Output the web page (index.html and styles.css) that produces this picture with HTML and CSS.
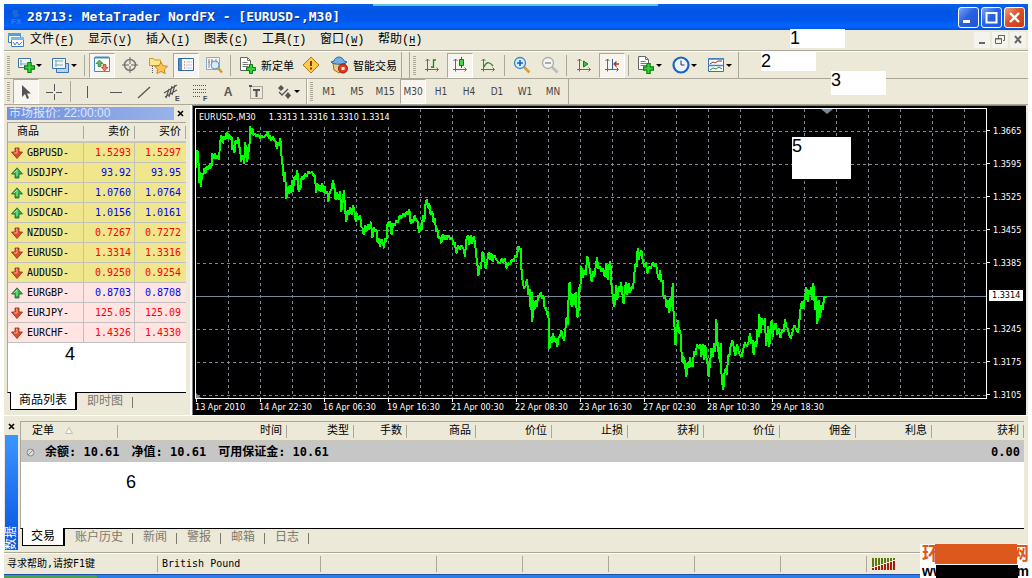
FILE: index.html
```html
<!DOCTYPE html>
<html lang="zh-CN">
<head>
    <meta charset="UTF-8">
    <meta name="viewport" content="width=device-width, initial-scale=1.0">
    <title>28713: MetaTrader NordFX - [EURUSD-,M30]</title>
    <link rel="stylesheet" href="styles.css">
</head>
<body>
    <!-- shared symbols -->
    <svg class="defs" width="0" height="0">
        <symbol id="down" viewBox="0 0 12 12">
            <path d="M4 1h4v4h3.5L6 11.5.5 5H4z" fill="#d8502c" stroke="#8f2a10" stroke-width=".8"/>
            <path d="M5 2h1v4H3" stroke="#ffb090" fill="none"/>
        </symbol>
        <symbol id="up" viewBox="0 0 12 12">
            <path d="M6 .8L11.5 7H8v4H4V7H.5z" fill="#2fae4a" stroke="#12682a" stroke-width=".8"/>
            <path d="M3 6l3-3v6" stroke="#a8f0a8" fill="none"/>
        </symbol>
        <symbol id="plus" viewBox="0 0 10 10">
            <path d="M3.5.5h3v3h3v3h-3v3h-3v-3h-3v-3h3z" fill="#35d235" stroke="#0b7d12"/>
        </symbol>
        <symbol id="axes" viewBox="0 0 18 18">
            <path d="M4.500 15.500V3M2.500 5l2-2 2 2M2 13.500h13M13.500 11.500l2 2-2 2" fill="none" stroke="#666"/>
        </symbol>
        <symbol id="doc" viewBox="0 0 12 14">
            <path d="M.5.500h7l3 3v10H.5z" fill="#fff" stroke="#666"/>
            <path d="M7.500.500v3h3M2.500 5.500h5M2.500 7.500h6M2.500 9.500h6" fill="none" stroke="#777"/>
        </symbol>
    </svg>

    <div class="window">
        <header class="titlebar">
            <svg class="logo" width="18" height="20" viewBox="0 0 18 20">
                <path d="M5 3h6l-2 3 3 2-5 3-3-4z" fill="#1c6fd6" opacity=".8"/>
                <text x="3" y="17" class="logo-text">FX</text>
            </svg>
            <h1>28713: MetaTrader NordFX - [EURUSD-,M30]</h1>
            <div class="win-buttons">
                <button class="win-btn" aria-label="最小化"><svg width="19" height="19"><path d="M4 12h7v3H4z" fill="#fff"/></svg></button>
                <button class="win-btn" aria-label="最大化"><svg width="19" height="19"><path d="M4.500 5h10v9.500h-10zM4 5h11" fill="none" stroke="#fff" stroke-width="2"/></svg></button>
                <button class="win-btn close" aria-label="关闭"><svg width="19" height="19"><path d="M5 5l9 9M14 5l-9 9" stroke="#fff" stroke-width="2.400"/></svg></button>
            </div>
        </header>

        <nav class="menubar">
            <svg class="menu-icon" width="16" height="16" viewBox="0 0 16 16">
                <path d="M.5 1.500h12v9H.5z" fill="#fff" stroke="#3d7ec8"/>
                <path d="M0 1h13v3H0z" fill="#5b9ce0"/>
                <path d="M3.500 5.500h12v9h-12z" fill="#fff" stroke="#3d7ec8"/>
                <path d="M3 5h13v3H3z" fill="#7fb6ee"/>
                <path d="M5 10l2 3 2-3 2 3 3-3" fill="none" stroke="#5577aa"/>
            </svg>
            <button>文件(<u>F</u>)</button>
            <button>显示(<u>V</u>)</button>
            <button>插入(<u>I</u>)</button>
            <button>图表(<u>C</u>)</button>
            <button>工具(<u>T</u>)</button>
            <button>窗口(<u>W</u>)</button>
            <button>帮助(<u>H</u>)</button>
            <div class="mdi-buttons">
                <button aria-label="最小化"><svg width="16" height="15"><path d="M5 10h6v2H5z" fill="#666"/></svg></button>
                <button aria-label="还原"><svg width="16" height="15"><path d="M6.500 6V3.500h6v5H11M6 3.500h7" fill="none" stroke="#666"/><path d="M3.500 6.500h6v5h-6zM3 7h7" fill="none" stroke="#666"/></svg></button>
                <button aria-label="关闭"><svg width="16" height="15"><path d="M5 4l6 7M11 4l-6 7" stroke="#666" stroke-width="2"/></svg></button>
            </div>
        </nav>

        <div class="toolrow">
            <div class="toolbar">
                <span class="grip"></span>
                <button class="tool drop" aria-label="新图表"><svg width="18" height="18" viewBox="0 0 18 18"><path d="M1.500 2.500h12v9h-12z" fill="#eef5fc" stroke="#3a73ad"/><path d="M4 4v6M3 8h8M3 5h2" stroke="#8aa" fill="none"/><use href="#plus" x="7" y="6" width="11" height="11"/></svg></button>
                <button class="tool drop" aria-label="配置"><svg width="18" height="18" viewBox="0 0 18 18"><path d="M4.500 7.500h12v9h-12z" fill="#b9d4ef" stroke="#3a73ad"/><path d="M.5 2.500h13v10H.5z" fill="#eef5fc" stroke="#3a73ad"/><path d="M3 5h8M3 9h8M4 4v7" stroke="#8aa" fill="none"/></svg></button>
                <span class="sep"></span>
                <button class="tool on" aria-label="市场报价"><svg width="18" height="18" viewBox="0 0 18 18"><path d="M1.500 1.500h15v14h-15z" fill="#fff" stroke="#4a86c5"/><path d="M2 1.500h14" stroke="#4a86c5" stroke-width="2"/><path d="M6.500 4L10 7.500H8v3H5v-3H3z" fill="#5dbb5d" stroke="#1c7f2c" stroke-width=".7"/><path d="M11.500 15L8.500 11.500H10v-3h3v3h2z" fill="#f08060" stroke="#b03010" stroke-width=".7"/></svg></button>
                <button class="tool" aria-label="数据窗口"><svg width="18" height="18" viewBox="0 0 18 18"><circle cx="9" cy="9" r="5.500" fill="none" stroke="#777" stroke-width="1.500"/><path d="M9 1v7M9 10v7M1 9h7M10 9h7" stroke="#666"/></svg></button>
                <button class="tool" aria-label="导航"><svg width="20" height="18" viewBox="0 0 20 18"><path d="M1.500 9.500v-7h4l1 1.500h6v5.500z" fill="#ffe68a" stroke="#c79a2a"/><path d="M4.500 10v7" stroke="#555" stroke-dasharray="1 1"/><path d="M13 6l2 3.800 4.500.5-3.200 3 .8 4.200-4.100-2-4.100 2 .8-4.200-3.200-3 4.500-.5z" fill="#ffc64a" stroke="#b8731c" stroke-width=".8"/></svg></button>
                <button class="tool on" aria-label="终端"><svg width="18" height="18" viewBox="0 0 18 18"><path d="M1.500 2.500h15v12h-15z" fill="#fff" stroke="#2e66a8"/><path d="M2 3h3v11H2z" fill="#4a90d9"/><path d="M7 6h1M7 9h1M7 12h1" stroke="#d03030"/><path d="M9 6h6M9 9h6M9 12h6" stroke="#b5c7da"/></svg></button>
                <button class="tool" aria-label="策略测试"><svg width="18" height="18" viewBox="0 0 18 18"><path d="M1.500 1.500h13v12h-13z" fill="#f4f4f4" stroke="#8ba9c8"/><path d="M4 3v9M7 3v6M11 3v5M3 6h2M6 5h2" stroke="#888"/><circle cx="10" cy="9" r="4" fill="#cfe8fb" fill-opacity=".8" stroke="#5595c8"/><path d="M13 12l4 4.500" stroke="#d4952a" stroke-width="2.500"/></svg></button>
                <span class="sep"></span>
                <button class="tool text order"><svg width="18" height="19" viewBox="0 0 18 19"><use href="#doc" x="1" y="1" width="12" height="14"/><use href="#plus" x="7" y="8" width="10" height="10"/></svg>新定单</button>
                <button class="tool" aria-label="MetaEditor"><svg width="18" height="18" viewBox="0 0 18 18"><path d="M9 1l8 8-8 8-8-8z" fill="#ffc94a" stroke="#b97510"/><path d="M8 5h2v5H8zM8 11.500h2v2H8z" fill="#7a3c00"/></svg></button>
                <button class="tool text expert"><svg width="19" height="18" viewBox="0 0 19 18"><path d="M3 7h12l-1 7-5 3-5-3z" fill="#f5c77b" stroke="#a86d22"/><path d="M1 6l3-1c0-2 3-4 5-4s5 2 5 4l3 1c-2 3-14 3-16 0z" fill="#6fb0e6" stroke="#28659f"/><circle cx="13" cy="12.500" r="4.500" fill="#e03a20" stroke="#8f1b0b"/><path d="M11.500 11h3v3h-3z" fill="#fff"/></svg>智能交易</button>
            </div>
            <div class="toolbar">
                <span class="grip"></span>
                <button class="tool" aria-label="柱状图"><svg width="18" height="18" viewBox="0 0 18 18"><use href="#axes" width="18" height="18"/><path d="M8 11h2.500V4H13M10.500 4v8" fill="none" stroke="#118a1c" stroke-width="1.300"/></svg></button>
                <button class="tool on" aria-label="阴阳烛"><svg width="18" height="18" viewBox="0 0 18 18"><use href="#axes" width="18" height="18"/><path d="M10.500 1v11" stroke="#0b7d12"/><path d="M8.500 3.500h4v6h-4z" fill="#45d645" stroke="#0b7d12"/></svg></button>
                <button class="tool" aria-label="折线图"><svg width="18" height="18" viewBox="0 0 18 18"><use href="#axes" width="18" height="18"/><path d="M5 11c2-5 5-6 9-1" fill="none" stroke="#2d8a35" stroke-width="1.300"/></svg></button>
                <span class="sep"></span>
                <button class="tool" aria-label="放大"><svg width="18" height="18" viewBox="0 0 18 18"><path d="M11 11l5.500 5.500" stroke="#d9a030" stroke-width="2.600"/><circle cx="7" cy="7" r="5.500" fill="#d4ecff" stroke="#3b84c8" stroke-width="1.300"/><path d="M7 4v6M4 7h6" stroke="#1c62b0" stroke-width="1.600"/></svg></button>
                <button class="tool" aria-label="缩小"><svg width="18" height="18" viewBox="0 0 18 18"><path d="M11 11l5.500 5.500" stroke="#bbb" stroke-width="2.600"/><circle cx="7" cy="7" r="5.500" fill="#f3f3f0" stroke="#aaa" stroke-width="1.300"/><path d="M4 7h6" stroke="#999" stroke-width="1.600"/></svg></button>
                <span class="sep"></span>
                <button class="tool" aria-label="自动滚动"><svg width="18" height="18" viewBox="0 0 18 18"><use href="#axes" width="18" height="18"/><path d="M8.500 5l4.500 3-4.500 3z" fill="#3ec03e" stroke="#0b7d12"/></svg></button>
                <button class="tool on" aria-label="图表平移"><svg width="18" height="18" viewBox="0 0 18 18"><use href="#axes" width="18" height="18"/><path d="M9.500 3v10" stroke="#2b62a8"/><path d="M16 8h-4M13.500 5.500L11 8l2.500 2.500" fill="none" stroke="#b03010" stroke-width="1.300"/></svg></button>
                <span class="sep"></span>
                <button class="tool drop" aria-label="指标"><svg width="18" height="18" viewBox="0 0 18 18"><use href="#doc" x="1" y="0" width="12" height="14"/><use href="#plus" x="6" y="7" width="11" height="11"/></svg></button>
                <button class="tool drop" aria-label="时段"><svg width="18" height="18" viewBox="0 0 18 18"><circle cx="9" cy="9" r="7.500" fill="#eaf5ff" stroke="#1d62c4" stroke-width="2.200"/><path d="M9 4.500V9h3.500" fill="none" stroke="#334"/></svg></button>
                <button class="tool drop" aria-label="模板"><svg width="18" height="18" viewBox="0 0 18 18"><path d="M1.500 2.500h15v13h-15z" fill="#fff" stroke="#3a73ad"/><path d="M1 3h16M2 9.500h14" stroke="#3f86cf" stroke-width="1.500"/><path d="M3 8l3-2 2 1 3-2h4" fill="none" stroke="#a02a1a"/><path d="M3 14l3-2 3 1 3-2 3 2" fill="none" stroke="#2d8a35"/></svg></button>
            </div>
        </div>

        <div class="toolrow">
            <div class="toolbar">
                <span class="grip"></span>
                <button class="tool on" aria-label="光标"><svg width="18" height="18" viewBox="0 0 18 18"><path d="M5 2v12l3-3 2 5 2-1-2-4.500h4z" fill="#555"/></svg></button>
                <button class="tool" aria-label="十字准线"><svg width="18" height="18" viewBox="0 0 18 18"><path d="M9.500 1v7M9.500 11v6M1 9.500h7M11 9.500h6" stroke="#555"/></svg></button>
                <span class="sep"></span>
                <button class="tool" aria-label="垂直线"><svg width="18" height="18"><path d="M8.500 3v12" stroke="#555"/></svg></button>
                <button class="tool" aria-label="水平线"><svg width="18" height="18"><path d="M3 9.500h12" stroke="#555"/></svg></button>
                <button class="tool" aria-label="趋势线"><svg width="18" height="18"><path d="M3 15L15 4" stroke="#555" stroke-width="1.300"/></svg></button>
                <button class="tool" aria-label="等距通道"><svg width="18" height="18" viewBox="0 0 18 18"><path d="M1 10L14 2M2 14l12-7M6 6l-3 9M9 3L6 14M12 2L9 12" stroke="#555" stroke-width="1.200"/><text x="12" y="18" class="icon-letter">E</text></svg></button>
                <button class="tool" aria-label="斐波纳契"><svg width="18" height="18" viewBox="0 0 18 18"><path d="M2 2.500h14M2 6.500h14M2 9.500h14M2 13.500h8" stroke="#555" stroke-dasharray="1 1"/><text x="12" y="18" class="icon-letter">F</text></svg></button>
                <button class="tool glyph">A</button>
                <button class="tool" aria-label="文字标签"><svg width="18" height="18" viewBox="0 0 18 18"><path d="M3.500 3.500h12v12h-12z" fill="none" stroke="#666" stroke-dasharray="1 1"/><path d="M2 2h3v2H2z" fill="#555"/><path d="M6 6h7v2h-2.500v6h-2V8H6z" fill="#555"/></svg></button>
                <button class="tool drop" aria-label="箭头"><svg width="18" height="18" viewBox="0 0 18 18"><path d="M6 2l3 3-3 3-3-3z M13 9l3 3.500-3 3.500-3-3.500z" fill="#555"/><path d="M4 9l3 3 6-6" fill="none" stroke="#555" stroke-width="1.300"/></svg></button>
            </div>
            <div class="toolbar periods">
                <span class="grip"></span>
                <button class="tool">M1</button>
                <button class="tool">M5</button>
                <button class="tool">M15</button>
                <button class="tool on">M30</button>
                <button class="tool">H1</button>
                <button class="tool">H4</button>
                <button class="tool">D1</button>
                <button class="tool">W1</button>
                <button class="tool">MN</button>
            </div>
        </div>

        <main class="workspace">
            <section class="market">
                <div class="market-title"><h2>市场报价: 22:00:00</h2><button class="x" aria-label="关闭"><svg width="7" height="7"><path d="M1 1l5 5M6 1L1 6" stroke="#000" stroke-width="1.600"/></svg></button></div>
                <div class="market-list">
                    <table class="quotes">
                        <thead><tr><th>商品</th><th>卖价</th><th>买价</th></tr></thead>
                        <tbody>
                            <tr class="fall"><td><svg width="12" height="12"><use href="#down"/></svg>GBPUSD-</td><td>1.5293</td><td>1.5297</td></tr>
                            <tr class="rise"><td><svg width="12" height="12"><use href="#up"/></svg>USDJPY-</td><td>93.92</td><td>93.95</td></tr>
                            <tr class="rise"><td><svg width="12" height="12"><use href="#up"/></svg>USDCHF-</td><td>1.0760</td><td>1.0764</td></tr>
                            <tr class="rise"><td><svg width="12" height="12"><use href="#up"/></svg>USDCAD-</td><td>1.0156</td><td>1.0161</td></tr>
                            <tr class="fall"><td><svg width="12" height="12"><use href="#down"/></svg>NZDUSD-</td><td>0.7267</td><td>0.7272</td></tr>
                            <tr class="fall"><td><svg width="12" height="12"><use href="#down"/></svg>EURUSD-</td><td>1.3314</td><td>1.3316</td></tr>
                            <tr class="fall"><td><svg width="12" height="12"><use href="#down"/></svg>AUDUSD-</td><td>0.9250</td><td>0.9254</td></tr>
                            <tr class="rise cross"><td><svg width="12" height="12"><use href="#up"/></svg>EURGBP-</td><td>0.8703</td><td>0.8708</td></tr>
                            <tr class="fall cross"><td><svg width="12" height="12"><use href="#down"/></svg>EURJPY-</td><td>125.05</td><td>125.09</td></tr>
                            <tr class="fall cross"><td><svg width="12" height="12"><use href="#down"/></svg>EURCHF-</td><td>1.4326</td><td>1.4330</td></tr>
                        </tbody>
                    </table>
                </div>
                <div class="tabs">
                    <button class="tab active">商品列表</button>
                    <button class="tab">即时图</button>
                </div>
            </section>

            <section class="chart">
                <div class="plot">
                    <svg class="plot-svg" width="100%" height="100%">
                        <g stroke="#778899" stroke-dasharray="3 3" fill="none" shape-rendering="crispEdges">
                            <path d="M32.500 0V800M64.500 0V800M96.500 0V800M128.500 0V800M160.500 0V800M192.500 0V800M224.500 0V800M256.500 0V800M288.500 0V800M320.500 0V800M352.500 0V800M384.500 0V800M416.500 0V800M448.500 0V800M480.500 0V800M512.500 0V800M544.500 0V800M576.500 0V800M608.500 0V800M640.500 0V800M672.500 0V800M704.500 0V800M736.500 0V800M768.500 0V800"/>
                            <path d="M1 22.500H2000M1 55.500H2000M1 88.500H2000M1 121.500H2000M1 154.500H2000M1 220.500H2000M1 253.500H2000M1 286.500H2000"/>
                        </g>
                        <path d="M0 187.500H2000" stroke="#778899" shape-rendering="crispEdges"/>
                        <g fill="none" stroke="#00ff00" stroke-width="6" stroke-linejoin="bevel" shape-rendering="crispEdges">
                            <polyline transform="translate(-6 -4) scale(.33333)" points="18,190 22,135 25,150 27,235 30,200 33,245 36,205 40,210 43,190 46,205 50,185 55,195 60,175 64,190 67,145 71,160 74,145 78,160 82,150 87,165 90,115 94,90 98,115 102,95 106,105 110,82 114,100 118,88 122,105 125,95 127,135 131,120 133,145 137,105 141,115 145,98 148,125 151,140 153,172 157,150 160,155 163,178 165,112 169,130 172,170 175,125 178,140 180,62 184,85 187,70 190,90 195,85 200,95 205,88 210,100 216,92 222,98 228,90 233,78 236,100 240,92 243,108 248,95 253,105 257,110 260,130 264,112 268,122 271,100 274,150 278,180 282,230 285,200 289,282 292,245 296,268 299,240 303,265 306,225 309,262 313,215 317,225 322,195 326,262 329,240 331,255 335,215 340,225 345,205 350,215 355,198 360,205 366,200 371,215 375,210 378,265 382,235 386,258 390,240 394,260 397,235 401,265 404,245 408,265 412,258 415,292 419,262 424,255 429,225 433,245 437,285 441,262 446,285 450,258 454,320 458,290 462,255 465,310 469,350 473,315 477,330 481,305 485,330 489,300 493,318 497,350 501,325 505,345 510,330 514,365 518,370 521,390 525,362 529,380 534,358 538,375 543,350 547,400 551,368 555,380 559,372 562,412 566,400 570,425 574,402 578,412 582,430 585,400 589,410 593,350 597,365 601,350 605,390 609,355 614,362 619,345 624,352 629,330 634,340 640,325 645,335 650,320 655,330 658,312 662,355 666,342 670,352 674,332 679,345 683,350 687,385 691,365 695,375 699,330 703,350 706,300 710,282 714,310 718,295 722,330 727,320 731,355 735,340 738,380 742,370 746,402 750,395"/>
                            <polyline transform="translate(244 111) scale(.33333)" points="0,50 4,70 8,42 12,60 16,45 20,60 25,45 30,58 36,52 40,75 44,68 49,100 54,75 59,88 64,75 70,85 75,110 79,60 84,45 88,75 92,45 96,72 101,50 105,68 109,110 112,130 115,168 119,140 123,145 127,95 132,115 137,148 141,125 146,98 150,118 154,100 158,125 163,105 168,118 174,125 180,130 186,115 190,128 195,115 199,145 205,130 210,132 216,118 221,125 226,105 230,112 235,78 239,90 242,85 245,160 248,185 252,205 256,200 261,178 265,225 269,208 272,270 275,215 277,307 280,240 283,270 287,240 291,260 294,225 298,232 302,218 306,235 310,225 314,265 318,262 321,285 325,275 328,388 332,350 335,368 339,338 343,365 347,355 352,380 356,352 360,350 364,332 368,350 372,362 376,330 380,290 384,315 386,220 389,185 392,225 395,260 399,222 403,255 407,215 411,290 415,290 418,200 421,205 424,138 428,175 432,150 437,165 442,108 446,130 450,150 455,185 459,155 463,170 467,140 471,112 475,145 480,140 484,155 489,145 494,170 499,130 503,180 507,135 511,125 514,190 518,225 523,262 526,230 529,195 532,240 536,200 540,215 543,185 547,220 551,252 555,205 558,185 562,225 566,190 570,218 575,200 579,205 583,160 587,130 590,140 593,85 596,120 600,100 604,90 608,120 613,140 618,128 622,160 627,140 632,145 638,128 643,140 648,130 653,165 657,180 660,150 664,185 668,180 671,235 675,225 680,265 684,240 688,280 692,230 695,260 698,190 700,265 703,310 706,375 710,330 714,300 717,340 721,330 724,390 728,430 732,410 736,440 739,470 743,425 747,445 750,412"/>
                            <polyline transform="translate(494 131) scale(.33333)" points="0,352 3,378 8,380 12,335 17,345 21,312 26,325 30,312 34,350 38,312 42,360 46,315 50,360 53,375 56,412 60,370 64,325 68,350 72,308 76,335 79,238 82,300 86,340 90,365 92,310 95,420 100,450 103,400 107,385 111,405 114,345 118,350 122,318 127,300 131,320 136,348 141,312 146,335 150,345 155,350 160,325 165,308 170,320 175,310 180,280 184,312 188,300 191,345 195,305 199,320 202,270 206,290 208,222 212,280 216,235 220,255 225,235 228,318 232,290 235,258 238,320 242,265 245,240 248,290 252,260 257,250 262,285 267,265 271,295 276,270 281,275 285,238 289,260 293,265 298,285 303,295 308,275 313,255 318,268 324,278 328,245 331,210 335,185 340,205 345,170 349,142 353,185 357,150 361,165 364,142 367,180 370,130 373,175 376,210 379,168 382,253 386,180 390,235 394,195 398,210 402,175 406,170 410,172"/>
                        </g>
                        <path d="M0 284l5 5H0z" fill="#778899"/>
                        <path d="M625 0h12l-6 5z" fill="#778899"/>
                    </svg>
                    <p class="chart-title"><span>EURUSD-,M30</span><span>1.3313 1.3316 1.3310 1.3314</span></p>
                </div>
                <ol class="prices">
                    <li>1.3665</li><li>1.3595</li><li>1.3525</li><li>1.3455</li><li>1.3385</li><li class="bid"><b>1.3314</b></li><li>1.3245</li><li>1.3175</li><li>1.3105</li>
                </ol>
                <ol class="dates">
                    <li>13 Apr 2010</li><li>14 Apr 22:30</li><li>16 Apr 06:30</li><li>19 Apr 16:30</li><li>21 Apr 00:30</li><li>22 Apr 08:30</li><li>23 Apr 16:30</li><li>27 Apr 02:30</li><li>28 Apr 10:30</li><li>29 Apr 18:30</li>
                </ol>
            </section>
        </main>

        <section class="terminal">
            <div class="side">
                <button class="x" aria-label="关闭"><svg width="7" height="7"><path d="M1 1l5 5M6 1L1 6" stroke="#000" stroke-width="1.600"/></svg></button>
                <div class="side-bar"><span>数据</span></div>
            </div>
            <div class="terminal-body">
                <div class="terminal-list">
                    <table class="orders">
                        <colgroup><col class="w-order"><col class="w-time"><col class="w-type"><col class="w-lots"><col class="w-symbol"><col class="w-num"><col class="w-num"><col class="w-num"><col class="w-num"><col class="w-num"><col class="w-num"><col></colgroup>
                        <thead>
                            <tr><th>定单 <svg width="8" height="7"><path d="M.5 6.500L4 .5l3.500 6z" fill="#f8f6ee" stroke="#c4c0ae"/></svg></th><th>时间</th><th>类型</th><th>手数</th><th>商品</th><th>价位</th><th>止损</th><th>获利</th><th>价位</th><th>佣金</th><th>利息</th><th>获利</th></tr>
                        </thead>
                        <tbody>
                            <tr><td colspan="11"><div class="balance"><svg width="9" height="9"><circle cx="4.500" cy="4.500" r="3.500" fill="#ddd" stroke="#888"/><path d="M2 7l5-5" stroke="#888"/></svg><span>余额: 10.61</span><span>净值: 10.61</span><span>可用保证金: 10.61</span></div></td><td>0.00</td></tr>
                        </tbody>
                    </table>
                </div>
                <div class="tabs">
                    <button class="tab active">交易</button>
                    <button class="tab">账户历史</button>
                    <button class="tab">新闻</button>
                    <button class="tab">警报</button>
                    <button class="tab">邮箱</button>
                    <button class="tab">日志</button>
                </div>
            </div>
        </section>

        <footer class="statusbar">
            <span class="help">寻求帮助,请按F1键</span>
            <span class="profile">British Pound</span>
            <span></span><span></span><span></span><span></span><span></span><span></span>
            <span class="link"><svg width="24" height="12" shape-rendering="crispEdges"><path d="M0 0h2v9H0zM3 0h2v8H3zM6 0h2v7H6zM9 0h2v6H9zM12 0h2v5h-2zM15 0h2v4h-2zM18 0h2v3h-2zM21 0h2v2h-2z" fill="#5a7a10"/><path d="M0 10h2v2H0zM3 9h2v3H3zM6 8h2v4H6zM9 7h2v5H9zM12 6h2v6h-2zM15 5h2v7h-2zM18 4h2v8h-2zM21 3h2v9h-2z" fill="#a01c0c"/></svg></span>
        </footer>
        <div class="taskbar"><i></i></div>
    </div>

    <!-- callouts over the window -->
    <div class="top-strip"></div>
    <span class="note n1">1</span>
    <span class="note n2">2</span>
    <span class="note n3">3</span>
    <span class="note n4">4</span>
    <span class="note n5">5</span>
    <span class="note n6">6</span>
    <div class="stamp">
        <div class="stamp-top"><span>环</span><i></i><span>网</span></div>
        <div class="stamp-url"><span>ww</span><i></i><span>m</span></div>
    </div>
</body>
</html>
```
FILE: styles.css
```css
* {
    margin: 0;
    padding: 0;
    box-sizing: border-box;
}

body {
    position: relative;
    height: 100vh;
    display: flex;
    padding: 4px 4px 0;
    overflow: hidden;
    background: #fff;
    color: #000;
    font-family: "DejaVu Sans Mono", "Noto Sans CJK SC", monospace;
    font-size: 12px;
    line-height: 16px;
}

button {
    border: none;
    background: none;
    font: inherit;
    color: inherit;
}

svg {
    display: block;
    flex: none;
}

ol {
    list-style: none;
}

.defs {
    position: absolute;
}

.window {
    flex: 1;
    min-width: 0;
    display: flex;
    flex-direction: column;
    background: #ece9d8;
}

.window > * {
    flex: none;
}

/* title bar */
.titlebar {
    display: flex;
    align-items: center;
    height: 26px;
    padding: 0 3px 0 4px;
    background: linear-gradient(#0a5fe8, #0054e3 30%, #0058ee 60%, #0066ff 85%, #0052d8);
}

.titlebar h1 {
    flex: 1;
    margin-left: 1px;
    color: #fff;
    font-size: 13px;
    line-height: 20px;
    white-space: nowrap;
    text-shadow: 1px 1px 0 #0a2a88;
}

.logo-text {
    font: bold 8px "Liberation Sans", sans-serif;
    fill: #2f80d8;
}

.win-buttons {
    display: flex;
    gap: 2px;
}

.win-btn {
    width: 21px;
    height: 21px;
    border: 1px solid #fff;
    border-radius: 3px;
    background: linear-gradient(135deg, #7ba4f4, #2a62e0 45%, #1e55d8);
}

.win-btn.close {
    background: linear-gradient(135deg, #f0a080, #dc5028 45%, #c83c10);
}

/* menu */
.menubar {
    display: flex;
    align-items: center;
    height: 22px;
    padding: 0 2px 2px 4px;
    border-bottom: 1px solid #fff;
    box-shadow: inset 0 -1px #aca899;
}

.menu-icon {
    margin-right: 6px;
}

.menubar > button {
    width: 58px;
    padding-top: 2px;
    font-family: "Liberation Mono", "Noto Sans CJK SC", monospace;
    text-align: left;
    white-space: nowrap;
}

.menubar u {
    font-size: 10px;
    text-underline-offset: 2px;
}

.mdi-buttons {
    display: flex;
    gap: 2px;
    margin-left: auto;
}

.mdi-buttons button {
    width: 16px;
    height: 16px;
    background: #f5f4ec;
}

/* toolbars */
.toolrow {
    display: flex;
    height: 27px;
    border-bottom: 1px solid #aca899;
}

.toolrow + .toolrow {
    height: 26px;
}

.toolbar {
    display: flex;
    align-items: center;
    padding-right: 1px;
    border-right: 1px solid #aca899;
}

.toolbar + .toolbar {
    margin-left: 7px;
    border-left: 1px solid #aca899;
}

.toolbar + .periods {
    margin-left: 0;
    border-left-color: #fff;
}

.grip {
    width: 3px;
    height: 19px;
    margin: 0 2px 0 3px;
    background: repeating-linear-gradient(#aca899 0 1px, #ece9d8 1px 2px);
}

.periods .grip {
    margin-left: 2px;
}

.tool {
    display: flex;
    align-items: center;
    justify-content: center;
    width: 28px;
    height: 25px;
    border: 1px solid transparent;
}

.tool.on {
    width: 26px;
    margin: 0 1px;
    border-color: #aca899 #fff #fff #aca899;
    background: #f7f5ee;
}

.tool.drop {
    width: 35px;
    justify-content: flex-start;
    padding-left: 4px;
}

.tool.drop::after {
    content: "";
    margin-left: 1px;
    border: 3px solid transparent;
    border-top-color: #000;
    border-bottom: 0;
}

.tool.text {
    width: auto;
    padding: 0 2px 0 4px;
    gap: 4px;
    font-family: "Noto Sans CJK SC", sans-serif;
    font-size: 11px;
    white-space: nowrap;
}

.tool.glyph {
    color: #555;
    font: bold 12px "Liberation Sans", sans-serif;
}

.periods .tool {
    color: #444;
    font-family: "DejaVu Sans Condensed", "DejaVu Sans", sans-serif;
    font-size: 10px;
}

.sep {
    width: 1px;
    height: 21px;
    margin: 0 3px 0 2px;
    background: #aca899;
}

.icon-letter {
    font: bold 7px "Liberation Sans", sans-serif;
    fill: #444;
}

/* workspace */
.window > .workspace {
    flex: 1;
    min-height: 0;
    display: grid;
    grid-template-columns: 188px minmax(0, 1fr);
    grid-template-rows: minmax(0, 1fr);
    border-bottom: 1px solid #fff;
}

.market {
    display: flex;
    flex-direction: column;
    padding: 2px 4px 5px 3px;
    border-right: 2px solid #fff;
}

.market-title {
    display: flex;
    justify-content: space-between;
    align-items: center;
    height: 13px;
    margin-bottom: 2px;
}

.market-title h2 {
    width: 167px;
    padding-left: 2px;
    background: linear-gradient(90deg, #7390dc, #98b2ea);
    color: #dce6fc;
    font-family: "Liberation Sans", "Noto Sans CJK SC", sans-serif;
    font-size: 12px;
    font-weight: normal;
    line-height: 13px;
}

.x {
    width: 9px;
    display: flex;
}

.market-list {
    flex: 1;
    background: #fff;
    border-top: 1px solid #aca899;
    border-left: 1px solid #aca899;
    border-bottom: 1px solid #000;
}

table {
    width: 100%;
    table-layout: fixed;
    border-collapse: separate;
    border-spacing: 0;
}

th {
    height: 20px;
    padding: 0 5px;
    background: #ece9d8 linear-gradient(#aca899, #aca899) right center / 1px 13px no-repeat;
    border-bottom: 2px solid #cbc7b8;
    font-size: 11px;
    font-weight: normal;
    text-align: right;
}

th:first-child {
    padding-left: 9px;
    text-align: left;
}

.quotes th:first-child {
    width: 76px;
}

.quotes th:nth-child(2) {
    width: 51px;
}

.quotes td {
    height: 20px;
    padding: 0 3px;
    border-right: 1px solid #c0c0c0;
    border-bottom: 1px solid #c0c0c0;
    background: #f0e68c;
    font-size: 10px;
    text-align: right;
}

.quotes td:last-child {
    border-right: none;
    padding-right: 5px;
}

.quotes td:first-child {
    color: #000;
    text-align: left;
}

.quotes td svg {
    display: inline-block;
    margin-right: 4px;
    vertical-align: middle;
}

.quotes .cross td {
    background: #ffe4e1;
}

.rise {
    color: #0000ff;
}

.fall {
    color: #ff0000;
}

/* bottom tabs, shared by both panels */
.tabs {
    display: flex;
    height: 17px;
    padding-left: 3px;
}

.tab {
    position: relative;
    height: 17px;
    padding: 0 10px;
    color: #7c7a6e;
    line-height: 17px;
    white-space: nowrap;
}

.tab:not(.active)::after {
    content: "";
    position: absolute;
    top: 4px;
    right: 0;
    width: 1px;
    height: 11px;
    background: #7c7a6e;
}

.tab.active {
    height: 18px;
    margin-top: -1px;
    padding: 0 8px;
    border: 1px solid #000;
    border-top: none;
    border-right-width: 2px;
    background: #fff;
    color: #000;
}

/* chart */
.chart {
    display: grid;
    grid-template-columns: minmax(0, 1fr) 39px;
    grid-template-rows: minmax(0, 1fr) 16px;
    margin-right: 2px;
    padding: 2px 0 0 2px;
    border: 1px solid #808080;
    border-width: 1px 0 0 1px;
    background: #000;
    color: #fff;
    font-family: "DejaVu Sans Condensed", "DejaVu Sans", sans-serif;
    font-size: 9px;
}

.plot {
    position: relative;
    border: 1px solid #fff;
    overflow: hidden;
}

.plot-svg {
    position: absolute;
}

.chart-title {
    position: relative;
    display: flex;
    gap: 13px;
    width: max-content;
    padding-left: 3px;
    background: #000;
}

.prices {
    min-height: 0;
    padding-top: 14px;
}

.prices li {
    display: flex;
    align-items: center;
    height: 17px;
    margin-bottom: 16px;
    padding-left: 6px;
    background: linear-gradient(#fff, #fff) left center / 3px 1px no-repeat;
}

.prices .bid {
    padding-left: 2px;
    background: none;
}

.bid b {
    padding: 0 3px;
    background: #fff;
    color: #000;
    font-weight: normal;
    line-height: 11px;
}

.dates {
    display: flex;
    grid-column: 1 / -1;
}

.dates li {
    flex: none;
    width: 64px;
    padding-top: 1px;
    line-height: 15px;
    white-space: nowrap;
    background: linear-gradient(#fff, #fff) 1px 0 / 1px 3px no-repeat;
}

/* terminal */
.terminal {
    display: flex;
    height: 137px;
    padding: 5px 4px 2px 1px;
    border-bottom: 1px solid #aca899;
}

.side {
    display: flex;
    flex-direction: column;
    width: 13px;
    margin-right: 2px;
}

.side .x {
    padding: 2px 0 0 3px;
    width: 13px;
}

.side-bar {
    flex: 1;
    display: flex;
    align-items: flex-end;
    margin-top: 5px;
    background: linear-gradient(#3d95ff, #1a6cf0 60%, #0850d8);
    color: #fff;
}

.side-bar span {
    writing-mode: vertical-rl;
    text-orientation: sideways;
    transform: rotate(180deg);
    line-height: 13px;
}

.terminal-body {
    flex: 1;
    min-width: 0;
    display: flex;
    flex-direction: column;
}

.terminal-list {
    flex: 1;
    border-top: 1px solid #aca899;
    border-left: 1px solid #aca899;
    border-bottom: 1px solid #000;
    background: #fff;
}

.terminal .tabs {
    height: 21px;
    padding-left: 2px;
}

.orders th:first-child {
    padding-left: 11px;
}

.orders th svg {
    display: inline-block;
    margin-left: 4px;
}

.w-order { width: 97px; }
.w-time { width: 169px; }
.w-type { width: 67px; }
.w-lots { width: 53px; }
.w-symbol { width: 69px; }
.w-num { width: 76px; }

.orders td {
    height: 20px;
    padding-right: 4px;
    background: #c6c6c6;
    font-weight: bold;
    text-align: right;
}

.balance {
    display: flex;
    align-items: center;
    gap: 12px;
    padding-left: 5px;
    white-space: nowrap;
}

.balance svg {
    margin-right: -2px;
}

/* status bar */
.statusbar {
    display: grid;
    grid-template-columns: 154px 163px 116px repeat(5, 86px) minmax(0, 1fr);
    align-items: center;
    height: 21px;
    border-top: 1px solid #fff;
    font-size: 10px;
}

.statusbar span {
    height: 16px;
    padding-left: 4px;
    border-right: 1px solid #aca899;
    white-space: nowrap;
}

.statusbar .help {
    padding-left: 3px;
}

.statusbar .link {
    padding: 2px 0 0 5px;
    border: none;
}

.taskbar {
    height: 4px;
    border-top: 1px solid #1c50b0;
    background: #2b7de9;
}

.taskbar i {
    display: block;
    width: 93px;
    height: 3px;
    background: #4ba04b;
}

/* callouts */
.top-strip {
    position: absolute;
    top: 4px;
    left: 373px;
    width: 285px;
    height: 2px;
    background: #5cc4d8;
}

.note {
    position: absolute;
    width: 55px;
    height: 19px;
    font-family: "Liberation Sans", sans-serif;
    font-size: 18px;
    line-height: 19px;
    background: #fff;
}

.n1 { top: 29px; left: 790px; }
.n2 { top: 52px; left: 761px; }
.n3 { top: 71px; left: 831px; height: 24px; }
.n4 { top: 345px; left: 65px; width: 12px; }
.n5 { top: 137px; left: 792px; width: 59px; height: 42px; }
.n6 { top: 473px; left: 126px; width: 12px; }

.stamp {
    position: absolute;
    right: 0;
    bottom: 0;
    width: 112px;
    height: 34px;
    padding: 0 3px 0 2px;
    background: #fff;
    font-family: "Liberation Sans", "Noto Sans CJK SC", sans-serif;
    font-size: 18px;
    font-weight: bold;
}

.stamp div {
    display: flex;
}

.stamp i {
    position: relative;
    flex: 1;
    margin: 0 -6px 0 -5px;
    background: #dc581c;
}

.stamp-top {
    height: 20px;
    margin-bottom: 1px;
    color: #dc581c;
    line-height: 20px;
}

.stamp-url {
    height: 13px;
    font-size: 14px;
    line-height: 13px;
}

.stamp .stamp-url i {
    margin: 0 -1px 0 -8px;
    background: #000;
}
```
